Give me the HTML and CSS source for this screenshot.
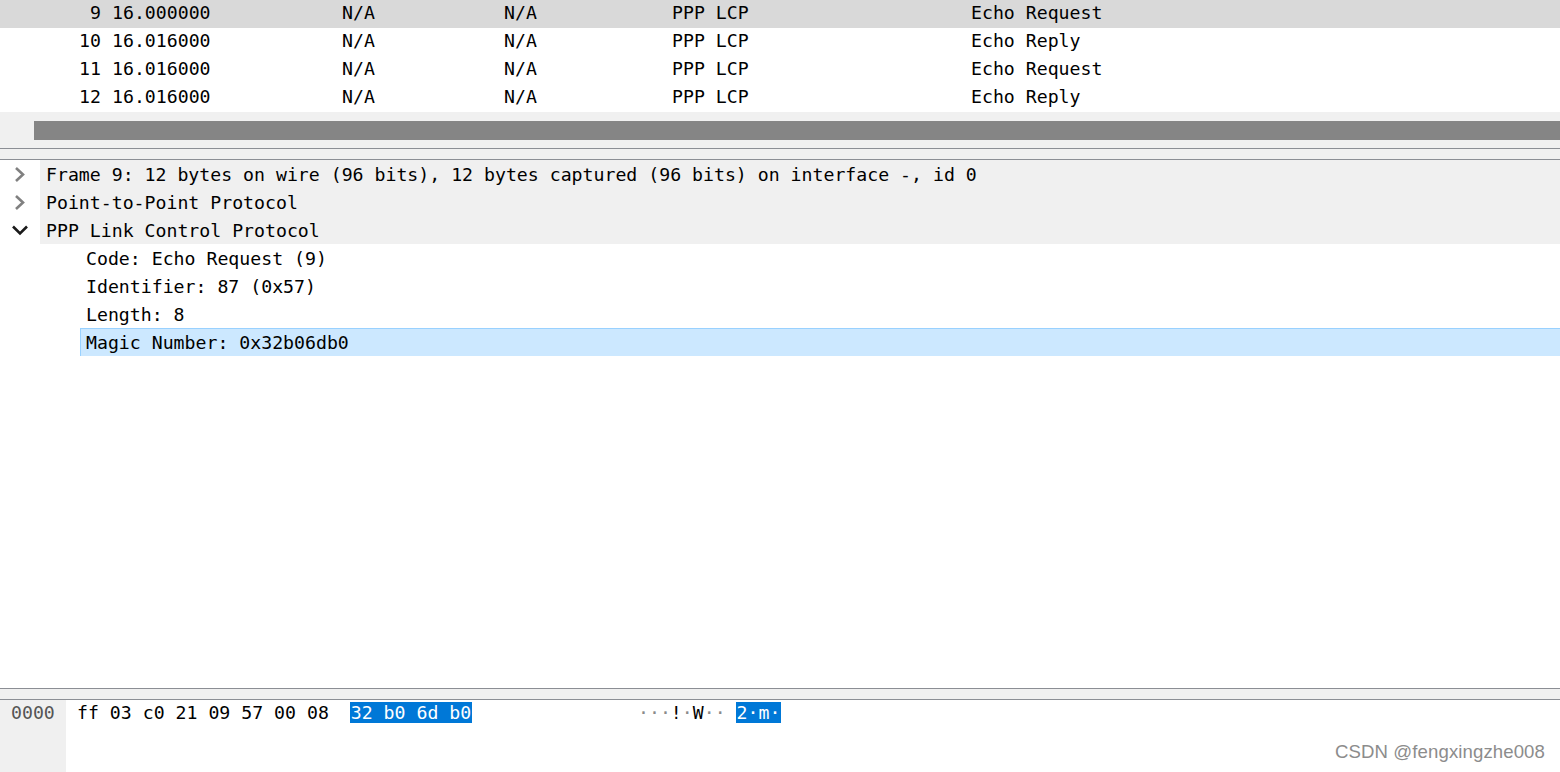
FILE: index.html
```html
<!DOCTYPE html>
<html>
<head>
<meta charset="utf-8">
<link rel="stylesheet" href="styles.css">
</head>
<body>
<div class="app">
  <div class="packet-list">
    <div class="prow selected">
      <span class="c-no">9</span><span class="c-time">16.000000</span><span class="c-src">N/A</span><span class="c-dst">N/A</span><span class="c-proto">PPP LCP</span><span class="c-info">Echo Request</span>
    </div>
    <div class="prow">
      <span class="c-no">10</span><span class="c-time">16.016000</span><span class="c-src">N/A</span><span class="c-dst">N/A</span><span class="c-proto">PPP LCP</span><span class="c-info">Echo Reply</span>
    </div>
    <div class="prow">
      <span class="c-no">11</span><span class="c-time">16.016000</span><span class="c-src">N/A</span><span class="c-dst">N/A</span><span class="c-proto">PPP LCP</span><span class="c-info">Echo Request</span>
    </div>
    <div class="prow">
      <span class="c-no">12</span><span class="c-time">16.016000</span><span class="c-src">N/A</span><span class="c-dst">N/A</span><span class="c-proto">PPP LCP</span><span class="c-info">Echo Reply</span>
    </div>
  </div>
  <div class="hscroll"><div class="thumb"></div></div>
  <div class="splitter"></div>
  <div class="tree">
    <div class="trow top">
      <span class="arrow"><svg width="40" height="28" viewBox="0 0 40 28"><polyline points="16,8 23,14.5 16,21" fill="none" stroke="#808080" stroke-width="2.6"/></svg></span>
      <span class="label">Frame 9: 12 bytes on wire (96 bits), 12 bytes captured (96 bits) on interface -, id 0</span>
    </div>
    <div class="trow top">
      <span class="arrow"><svg width="40" height="28" viewBox="0 0 40 28"><polyline points="16,8 23,14.5 16,21" fill="none" stroke="#808080" stroke-width="2.6"/></svg></span>
      <span class="label">Point-to-Point Protocol</span>
    </div>
    <div class="trow top">
      <span class="arrow"><svg width="40" height="28" viewBox="0 0 40 28"><polyline points="13,10.5 20,17.5 27,10.5" fill="none" stroke="#1a1a1a" stroke-width="2.6"/></svg></span>
      <span class="label">PPP Link Control Protocol</span>
    </div>
    <div class="trow child">Code: Echo Request (9)</div>
    <div class="trow child">Identifier: 87 (0x57)</div>
    <div class="trow child">Length: 8</div>
    <div class="trow child sel">Magic Number: 0x32b06db0</div>
  </div>
  <div class="splitter"></div>
  <div class="bytes">
    <div class="offsets">0000</div>
    <div class="hexdump"><span class="hex">ff 03 c0 21 09 57 00 08  <span class="hl">32 b0 6d b0</span></span><span class="ascii"><span class="np">···</span>!<span class="np">·</span>W<span class="np">··</span> <span class="hl">2·m·</span></span></div>
  </div>
  <div class="watermark">CSDN @fengxingzhe008</div>
</div>
</body>
</html>
```
FILE: styles.css
```css
* { box-sizing: border-box; }
html, body {
  margin: 0;
  padding: 0;
  background: #ffffff;
}
.app {
  width: 1560px;
  height: 772px;
  display: flex;
  flex-direction: column;
  position: relative;
  overflow: hidden;
  font-family: "DejaVu Sans Mono", "Liberation Mono", monospace;
  font-size: 18.2px;
  color: #000;
}
.packet-list {
  display: flex;
  flex-direction: column;
}
.prow {
  height: 28px;
  line-height: 26px;
  display: flex;
  white-space: pre;
}
.prow.selected { background: #d9d9d9; }
.c-no { width: 101px; text-align: right; }
.c-time { width: 241px; padding-left: 11px; }
.c-src { width: 162px; }
.c-dst { width: 168px; }
.c-proto { width: 299px; }
.c-info { flex: 1; }
.hscroll {
  height: 36px;
  background: #f0f0f0;
  padding-top: 9px;
  padding-left: 34px;
}
.thumb {
  height: 19px;
  background: #858585;
}
.splitter {
  height: 12px;
  background: #f0f0f0;
  border-top: 1px solid #8b8e94;
  border-bottom: 1px solid #8b8e94;
}
.tree {
  flex: 1;
  display: flex;
  flex-direction: column;
}
.trow {
  height: 28px;
  line-height: 28px;
  white-space: pre;
}
.trow.top {
  display: flex;
}
.arrow {
  width: 40px;
  height: 28px;
  display: block;
  background: #fff;
}
.arrow svg { display: block; }
.label {
  flex: 1;
  background: #f0f0f0;
  padding-left: 6px;
  padding-top: 1px;
  line-height: 27px;
}
.trow.child {
  padding-left: 86px;
  padding-top: 1px;
  line-height: 27px;
}
.trow.sel {
  margin-left: 80px;
  padding-left: 5px;
  padding-top: 0;
  background: #cce8ff;
  border-top: 1px solid #99d1ff;
  border-left: 1px solid #99d1ff;
  line-height: 28px;
}
.bytes {
  height: 72px;
  display: flex;
}
.offsets {
  width: 66px;
  background: #f0f0f0;
  color: #555;
  padding-left: 11px;
  padding-top: 1px;
  line-height: 24px;
}
.hexdump {
  padding-left: 11px;
  padding-top: 1px;
  line-height: 24px;
  white-space: pre;
  display: flex;
}
.hex { width: 561px; }
.hl {
  background: #0078d7;
  color: #fff;
  padding: 0 1px;
  margin: 0 -1px;
}
.np { color: #8a8a8a; }
.watermark {
  position: absolute;
  right: 15px;
  bottom: 9px;
  font-family: "Liberation Sans", Arial, sans-serif;
  font-size: 18.6px;
  color: #8c8c8c;
  letter-spacing: 0.1px;
}
```
